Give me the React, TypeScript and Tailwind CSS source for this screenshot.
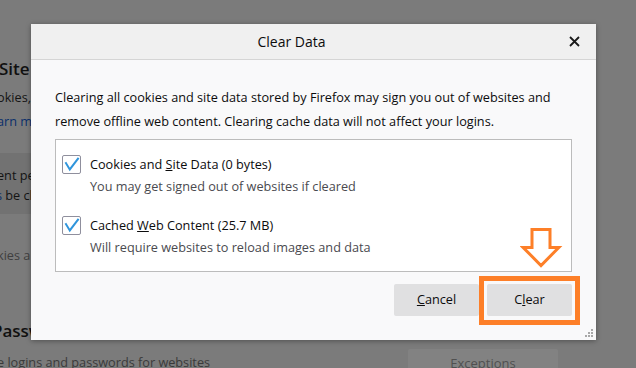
import React from "react";

function CheckBox() {
  return (
    <div className="w-[19px] h-[19px] shrink-0 rounded-[2px] border border-[#8f8f9d] bg-white flex items-center justify-center">
      <svg width="17" height="17" viewBox="0 0 17 17">
        <path d="M3 7.2 L6.8 13.4 L15 2.6" fill="none" stroke="#2f95dc" strokeWidth="2" strokeLinecap="square" strokeLinejoin="miter" />
      </svg>
    </div>
  );
}

function Item({ label, desc }: { label: React.ReactNode; desc: string }) {
  return (
    <div className="flex items-start gap-[9px]">
      <CheckBox />
      <div className="flex flex-col">
        <div className="leading-[19px] text-[#0c0c0d]">{label}</div>
        <div className="leading-[19px] mt-[3px] text-[#4a4a4f]">{desc}</div>
      </div>
    </div>
  );
}

export default function App() {
  return (
    <div
      className="relative w-[636px] h-[368px] overflow-hidden bg-[#7b7b7b] text-[12.7px]"
      style={{ fontFamily: '"Open Sans", "Noto Sans", sans-serif' }}
    >
      {/* background page (dimmed) */}
      <div className="flex flex-col pt-[57px] w-[636px]">
        <div className="ml-[-1px] text-[17px] font-semibold leading-[24px] text-[#101010]">Site Data</div>
        <div className="ml-[-3px] mt-[6px] leading-[20px] text-[#141414]">okies, site data and cache</div>
        <div className="ml-[-3px] mt-[4px] leading-[20px] text-[#0a2f6b]">arn more</div>
        <div className="mt-[22px] h-[61px] w-[560px] bg-[#727272] flex flex-col pt-[12px]">
          <div className="ml-[-3px] leading-[20px] text-[#141414]">ent permanent</div>
          <div className="ml-[-4px] leading-[20px] text-[#141414]">
            <span className="text-[#0a2f6b]">s</span> be cleared
          </div>
        </div>
        <div className="ml-[-3px] mt-[31px] leading-[20px] text-[#3f3f3f]">kies and site data</div>
        <div className="ml-[-8px] mt-[54px] text-[17px] font-semibold leading-[24px] text-[#101010]">Passwords</div>
        <div className="flex items-start mt-[6px]">
          <div className="ml-[-3px] mt-[3px] leading-[20px] text-[#3a3a3a] w-[380px]">e logins and passwords for websites</div>
          <div className="ml-[31px] w-[150px] h-[30px] rounded-[2px] bg-[#828282] flex items-center justify-center text-[#505050] text-[13px]">
            Exceptions
          </div>
        </div>
      </div>

      {/* dialog */}
      <div className="absolute left-[31px] top-[24px] w-[565px] h-[316px] bg-[#f9f9fa] shadow-[0_1px_5px_rgba(0,0,0,0.35)] flex flex-col">
        <div className="h-[36px] shrink-0 bg-[#f0f0f0] border-b border-[#d5d5d5] flex items-center">
          <div className="flex-1 text-center text-[14px] text-[#0c0c0d]">Clear Data</div>
          <div className="w-[44px] h-[35px] flex items-center justify-center">
            <svg width="11" height="11" viewBox="0 0 11 11">
              <path d="M1 1 L10 10 M10 1 L1 10" stroke="#1a1a1a" strokeWidth="1.8" />
            </svg>
          </div>
        </div>
        <div className="flex flex-col px-[24px] pt-[26px]">
          <p className="leading-[23.5px] text-[#0c0c0d]">
            Clearing all cookies and site data stored by Firefox may sign you out of websites and remove offline web content. Clearing cache data will not affect your logins.
          </p>
          <div className="mt-[6px] h-[133px] bg-white border border-[#bcbcbc] flex flex-col pl-[6px] pt-[15px] gap-[20px]">
            <Item
              label={<>Cookies and <u>S</u>ite Data (0 bytes)</>}
              desc="You may get signed out of websites if cleared"
            />
            <Item
              label={<>Cached <u>W</u>eb Content (25.7 MB)</>}
              desc="Will require websites to reload images and data"
            />
          </div>
          <div className="mt-[12px] flex justify-end gap-[8px]">
            <div className="w-[85px] h-[32px] rounded-[2px] bg-[#e0e0e1] flex items-center justify-center text-[#0c0c0d]">
              <span><u>C</u>ancel</span>
            </div>
            <div className="relative w-[85px] h-[32px] rounded-[2px] bg-[#e0e0e1] flex items-center justify-center text-[#0c0c0d]">
              <span>C<u>l</u>ear</span>
              <div className="absolute left-[-8px] top-[-8px] w-[101px] h-[49px] border-[5px] border-[#fd7f28]" />
            </div>
          </div>
        </div>
        {/* resize grip */}
        <svg className="absolute right-[2px] bottom-[2px]" width="9" height="9" viewBox="0 0 9 9">
          <rect x="6" y="0" width="2" height="2" fill="#a8a8a8" />
          <rect x="3" y="3" width="2" height="2" fill="#a8a8a8" />
          <rect x="6" y="3" width="2" height="2" fill="#a8a8a8" />
          <rect x="0" y="6" width="2" height="2" fill="#a8a8a8" />
          <rect x="3" y="6" width="2" height="2" fill="#a8a8a8" />
          <rect x="6" y="6" width="2" height="2" fill="#a8a8a8" />
        </svg>
      </div>

      {/* orange arrow annotation */}
      <svg className="absolute left-[520px] top-[226px]" width="43" height="44" viewBox="0 0 43 44">
        <polygon
          points="12,3.5 30,3.5 30,21.5 38.8,21.5 21,39.5 3.2,21.5 12,21.5"
          fill="#ffffff"
          stroke="#fd7f28"
          strokeWidth="3"
          strokeLinejoin="miter"
        />
      </svg>
    </div>
  );
}
